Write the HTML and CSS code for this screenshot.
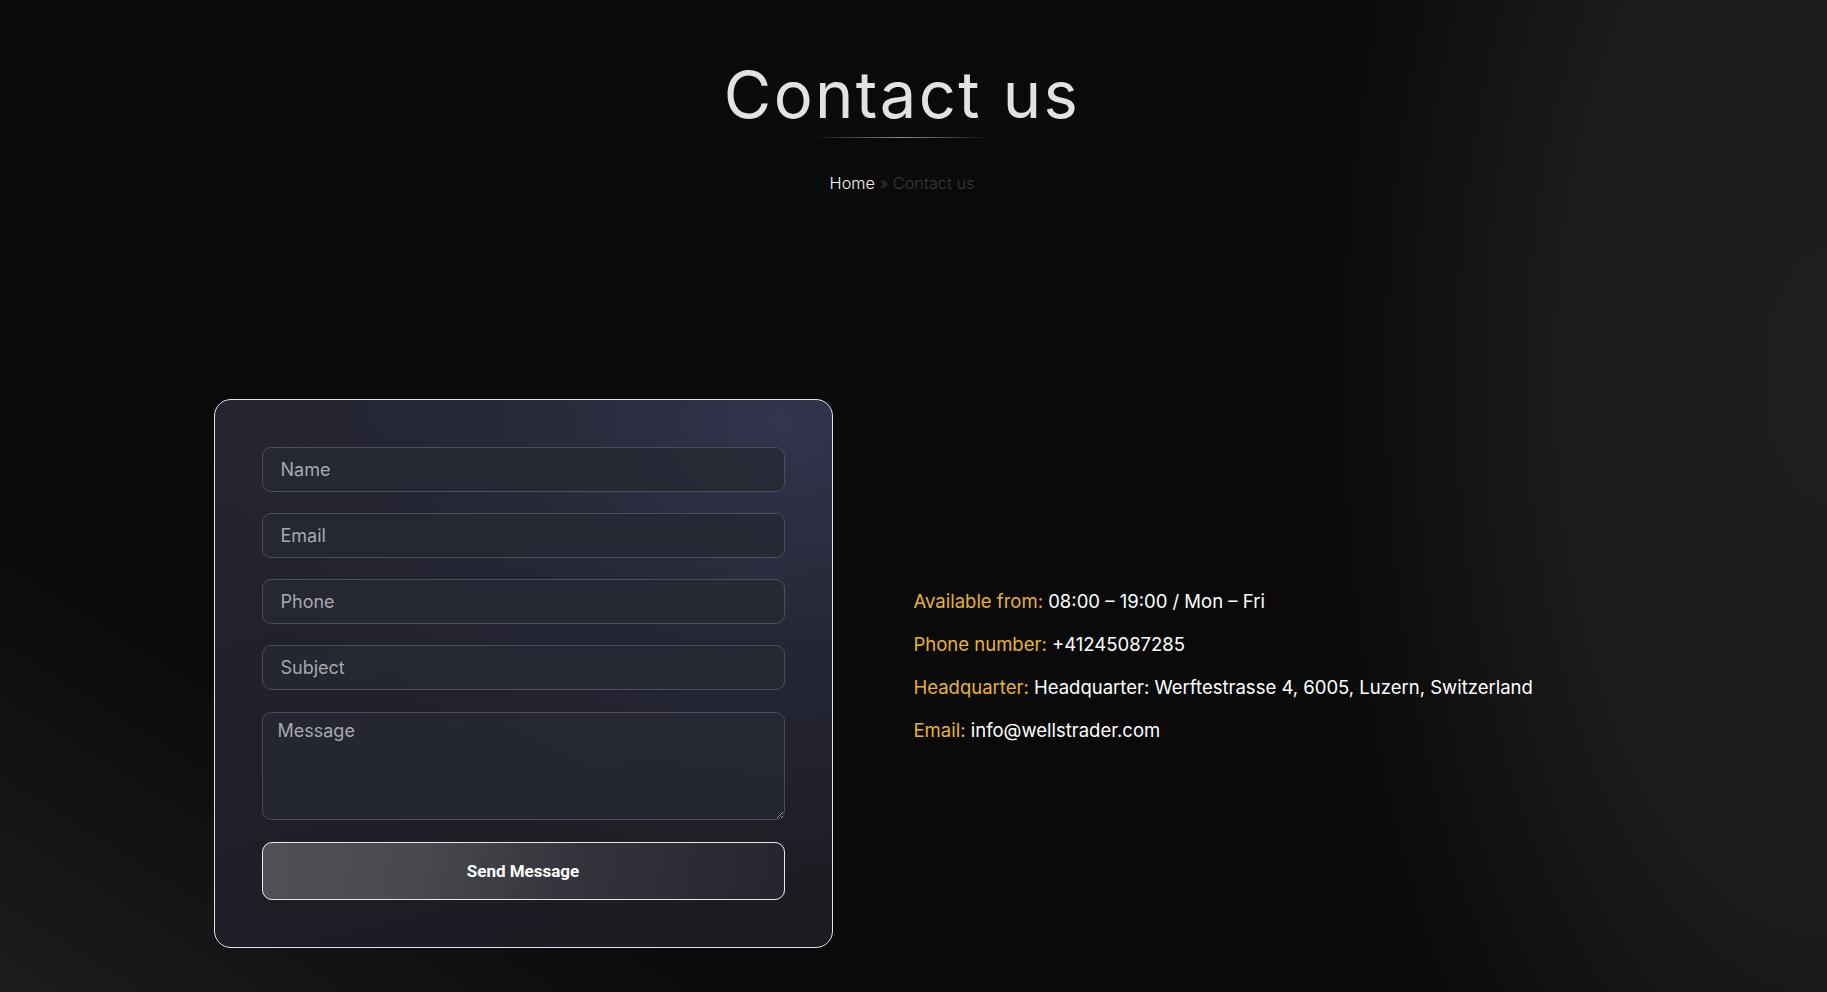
FILE: index.html
```html
<!DOCTYPE html>
<html lang="en">
<head>
<meta charset="utf-8">
<title>Contact us</title>
<link rel="stylesheet" href="styles.css">
</head>
<body>
<header class="hero">
  <h1 class="title">Contact us</h1>
  <div class="rule"></div>
  <nav class="crumbs"><a class="home" href="#">Home</a> <span class="sep">»</span> <span class="current">Contact us</span></nav>
</header>
<main class="contact">
  <div class="col">
    <form class="card">
      <input class="field" type="text" placeholder="Name">
      <input class="field" type="email" placeholder="Email">
      <input class="field" type="tel" placeholder="Phone">
      <input class="field" type="text" placeholder="Subject">
      <textarea class="field area" placeholder="Message"></textarea>
      <button class="send" type="button">Send Message</button>
    </form>
  </div>
  <div class="info">
    <p><span class="label">Available from:</span> 08:00 – 19:00 / Mon – Fri</p>
    <p><span class="label">Phone number:</span> +41245087285</p>
    <p><span class="label">Headquarter:</span> Headquarter: Werftestrasse 4, 6005, Luzern, Switzerland</p>
    <p><span class="label">Email:</span> info@wellstrader.com</p>
  </div>
</main>
</body>
</html>
```
FILE: styles.css
```css
html, body {
  margin: 0;
  padding: 0;
}
body {
  min-height: 992px;
  overflow: hidden;
  font-family: "Inter", "Noto Sans", sans-serif;
  color: #ffffff;
  background-color: #0a0a0b;
  background-image:
    radial-gradient(ellipse 560px 1150px at 100% 38%, #1e1e1e 0%, #1c1c1c 45%, rgba(10,10,11,0) 90%),
    linear-gradient(32deg, rgba(30,30,30,0.9) 0%, rgba(26,26,26,0.6) 10%, rgba(10,10,11,0) 22%);
  background-repeat: no-repeat;
}
.hero {
  display: flex;
  flex-direction: column;
  align-items: center;
  padding: 57px 23px 0 0;
}
.title {
  margin: 0;
  font-weight: 400;
  font-size: 65px;
  line-height: 76px;
  color: #e2e2e2;
  letter-spacing: 2.4px;
}
.rule {
  width: 180px;
  height: 1px;
  margin-top: 4px;
  background: linear-gradient(90deg, rgba(140,140,140,0), #8a8a8a 50%, rgba(140,140,140,0));
}
.crumbs {
  margin-top: 34px;
  font-size: 16.3px;
  line-height: 22px;
  font-weight: 300;
}
.home {
  color: #f2f2f2;
  text-decoration: none;
}
.sep, .current {
  color: #3a3a3a;
}
.contact {
  width: 1400px;
  margin: 205px auto 0;
  display: grid;
  grid-template-columns: 1fr 1fr;
}
.card {
  width: 619px;
  box-sizing: border-box;
  padding: 47px 47px 47px 47px;
  border: 1px solid #e4e4e4;
  border-radius: 17px;
  display: flex;
  flex-direction: column;
  gap: 21px;
  background-image:
    radial-gradient(ellipse 560px 460px at 92% 4%, rgba(52,53,80,0.95) 0%, rgba(44,45,66,0.55) 45%, rgba(30,31,40,0) 100%),
    linear-gradient(165deg, #24252f 0%, #1e1f27 60%, #1b1c22 100%);
}
.field {
  display: block;
  box-sizing: border-box;
  width: 100%;
  height: 45px;
  margin: 0;
  padding: 0 18px;
  border: 1px solid #4a4c58;
  border-radius: 9px;
  background: rgba(38,40,51,0.85);
  color: #e0e0e0;
  font-family: "Inter", "Noto Sans", sans-serif;
  font-size: 18px;
  outline: none;
}
.field::placeholder {
  color: #a7a8b0;
}
.area {
  height: 108px;
  margin-top: 1px;
  padding: 6px 15px;
  resize: vertical;
  line-height: 24px;
}
.send {
  height: 58px;
  margin-top: 1px;
  border: 1.5px solid #e6e6e6;
  border-radius: 10px;
  color: #ffffff;
  font-family: "Roboto", "Liberation Sans", sans-serif;
  font-weight: 700;
  font-size: 17px;
  cursor: pointer;
  background-image: linear-gradient(100deg, #505157 0%, #48494f 30%, #33343b 60%, #24252d 100%);
}
.info {
  align-self: center;
  font-size: 18.5px;
  line-height: 27px;
}
.info p {
  margin: 0 0 16px;
  color: #ffffff;
}
.label {
  color: #e9b42b;
}
```
